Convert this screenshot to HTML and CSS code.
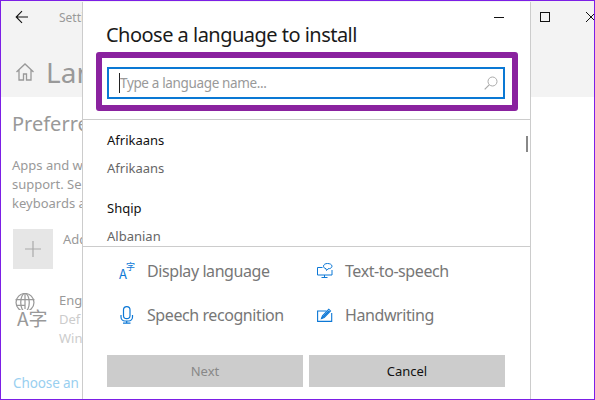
FILE: index.html
```html
<!DOCTYPE html>
<html lang="en">
<head>
<meta charset="utf-8">
<title>Choose a language to install</title>
<link rel="stylesheet" href="styles.css">
</head>
<body>
<div class="window">
  <div class="settings">
    <header class="top">
      <div class="bar">
        <svg class="back" width="14" height="14" viewBox="0 0 14 14"><path d="M13 7H1.500M7 1.200 1.200 7 7 12.800" fill="none" stroke="#111" stroke-width="1.100"/></svg>
        <span class="app">Setti</span>
      </div>
      <div class="heading">
        <svg class="home" width="20" height="20" viewBox="0 0 20 20"><path d="M1.500 10 10 2l8.500 8M4 8v10h4.500v-6h3v6H16V8" fill="none" stroke="#999" stroke-width="1.300"/></svg>
        <span class="page">Lan</span>
      </div>
    </header>
    <main class="content">
      <h2 class="sub">Preferre</h2>
      <p class="para">Apps and w<br>support. Se<br>keyboards a</p>
      <div class="add">
        <div class="tile"><svg width="20" height="20" viewBox="0 0 20 20"><path d="M10 2v16M2 10h16" stroke="#aaa" stroke-width="1.200"/></svg></div>
        <span class="add-label">Add</span>
      </div>
      <div class="lang">
        <div class="lang-icon">
          <svg class="globe" width="22" height="18" viewBox="0 0 22 18"><g fill="none" stroke="#999" stroke-width="1.300"><circle cx="11" cy="10" r="9.500"/><ellipse cx="11" cy="10" rx="4.500" ry="9.500"/><path d="M1 7h20M11 0v17M2 13h9"/></g></svg>
          <span class="lang-glyph">A字</span>
        </div>
        <div class="lang-text"><span class="l1">Eng</span><span class="l2">Def</span><span class="l2">Win</span></div>
      </div>
      <a class="choose">Choose an</a>
    </main>
  </div>

  <div class="ctl-max"></div>
  <svg class="ctl-close" width="10" height="10" viewBox="0 0 10 10"><path d="M0 0l10 10M10 0 0 10" stroke="#111" stroke-width="1"/></svg>

  <section class="dialog">
    <div class="min"></div>
    <h1 class="title">Choose a language to install</h1>
    <div class="highlight">
      <div class="search">
        <span class="caret"></span>
        <span class="placeholder">Type a language name...</span>
        <svg class="mag" width="14" height="14" viewBox="0 0 14 14"><circle cx="8.500" cy="5.500" r="4.500" fill="none" stroke="#aaa" stroke-width="1"/><path d="M5.200 8.800 .7 13.300" stroke="#aaa" stroke-width="1.200"/></svg>
      </div>
    </div>
    <div class="list">
      <div class="item"><span class="native">Afrikaans</span><span class="eng">Afrikaans</span></div>
      <div class="item"><span class="native">Shqip</span><span class="eng">Albanian</span></div>
      <div class="thumb"></div>
    </div>
    <div class="features">
      <div class="feat">
        <span class="ficon glyphs"><span class="ga">A</span><span class="gz">字</span></span>
        <span>Display language</span>
      </div>
      <div class="feat">
        <svg class="ficon" width="16" height="16" viewBox="0 0 16 16"><g fill="none" stroke="#0d78d6" stroke-width="1"><path d="M5.500 4.500H.5v7.500h14.500V7"/><path d="M7.500 12v2.500M4.500 14.500h6"/><path d="M10.500.5c-2.200 0-4 1-4 2.700 0 1.300 1 2.200 2.500 2.500l.5 1.800 1.500-1.700c2.300-.1 4-1 4-2.600S13 .5 10.500.5z"/></g></svg>
        <span>Text-to-speech</span>
      </div>
      <div class="feat">
        <svg class="ficon" width="16" height="18" viewBox="0 0 16 18"><g fill="none" stroke="#0d78d6" stroke-width="1.200"><rect x="4.500" y=".6" width="6.500" height="12" rx="3.200"/><path d="M2 9v2a4 4 0 0 0 4 4h3.500a4 4 0 0 0 4-4V9M7.700 15v2M4 17.200h7.500"/></g></svg>
        <span>Speech recognition</span>
      </div>
      <div class="feat">
        <svg class="ficon" width="16" height="14" viewBox="0 0 16 14"><g fill="none" stroke="#0d78d6" stroke-width="1.100"><path d="M9.500 3H.6v10.400h14.100V5"/><path d="M4.500 10.500l1-2.700L11.800 1.200l1.700 1.700L7.200 9.500z"/><path d="M5 10l1.800-1.700L12 3" stroke-width="1.500"/></g></svg>
        <span>Handwriting</span>
      </div>
    </div>
    <div class="actions">
      <button class="btn off">Next</button>
      <button class="btn">Cancel</button>
    </div>
  </section>
</div>
</body>
</html>
```
FILE: styles.css
```css
* { box-sizing: border-box; }
html, body { margin: 0; height: 100%; }
body { font-family: "Noto Sans", "Open Sans", sans-serif; background: #fff; }
.window { position: relative; width: 595px; height: 400px; border: 1px solid #7c1fe6; overflow: hidden; background: #fff; }
.settings { color: #999; height: 100%; }
.top { background: #f3f3f3; height: 96px; padding: 6px 0 0 14px; }
.bar { display: flex; align-items: center; height: 20px; }
.back { display: block; }
.app { font-size: 12px; margin-left: 30px; }
.heading { display: flex; align-items: center; margin-top: 25px; }
.home { display: block; }
.page { font-size: 28px; line-height: 40px; margin-left: 11px; white-space: nowrap; }
.content { padding: 13px 0 0 11px; white-space: nowrap; }
.sub { font-size: 20px; font-weight: 400; margin: 0; line-height: 28px; }
.para { font-size: 13px; line-height: 19px; margin: 18px 0 0 0; }
.add { display: flex; align-items: flex-start; gap: 10px; margin: 16px 0 0 1px; }
.tile { width: 40px; height: 40px; background: #e6e6e6; display: flex; align-items: center; justify-content: center; }
.add-label { font-size: 13px; margin-top: 1px; }
.lang { display: flex; margin: 24px 0 0 3px; gap: 11px; }
.lang-icon { width: 33px; height: 34px; display: flex; flex-direction: column; align-items: flex-start; }
.globe { display: block; margin-left: -1px; }
.lang-glyph { font: 19px/19px "Noto Sans CJK SC", "Noto Sans", sans-serif; margin: -2px 0 0 2px; color: #999; white-space: nowrap; }
.lang-text { display: flex; flex-direction: column; font-size: 13px; line-height: 19px; margin-top: -2px; }
.l2 { color: #ccc; }
.choose { display: block; font-size: 13.500px; letter-spacing: -.1px; color: #99cff0; margin: 26px 0 0 1px; line-height: 19px; }
.ctl-max { position: absolute; left: 539px; top: 11px; width: 10px; height: 10px; border: 1px solid #111; }
.ctl-close { position: absolute; left: 585px; top: 11px; }
.dialog { position: absolute; left: 81px; top: 1px; bottom: 0; width: 449px; background: #fff; border-left: 1px solid #ccc; border-right: 1px solid #ccc; display: flex; flex-direction: column; }
.min { position: absolute; left: 411px; top: 15px; width: 10px; height: 1px; background: #111; }
.title { font-size: 20px; font-weight: 400; letter-spacing: -.52px; color: #1a1a1a; margin: 0; padding: 16px 0 0 23px; line-height: 33px; height: 50px; white-space: nowrap; }
.highlight { margin-left: 13px; width: 422px; height: 59px; border: 6px solid #8a229f; border-radius: 3px; padding: 9px 7px 0 5px; }
.search { height: 32px; border: 2px solid #0a78d4; display: flex; align-items: center; padding: 0 5px 0 10px; position: relative; }
.caret { width: 1px; height: 20px; background: #222; }
.placeholder { font-size: 13.500px; letter-spacing: -.35px; color: #999; flex: 1; white-space: nowrap; }
.mag { display: block; }
.list { position: relative; margin-top: 8px; height: 128px; border-top: 1px solid #ccc; border-bottom: 1px solid #ccc; overflow: hidden; padding: 11px 0 0 24px; }
.item { display: flex; flex-direction: column; margin-bottom: 21px; }
.native { font-size: 13px; line-height: 19px; color: #111; }
.eng { font-size: 13px; line-height: 19px; color: #666; margin-top: 9px; }
.thumb { position: absolute; right: 2px; top: 16px; width: 2px; height: 16px; background: #888; }
.features { display: grid; grid-template-columns: 198px 1fr; row-gap: 18px; padding: 11px 0 0 36px; color: #777; font-size: 16px; letter-spacing: -.42px; line-height: 26px; }
.feat { display: flex; align-items: center; gap: 12px; white-space: nowrap; }
.ficon { flex: none; width: 16px; }
.glyphs { position: relative; height: 18px; display: block; color: #0d78d6; font-family: "Noto Sans CJK SC", sans-serif; letter-spacing: 0; }
.ga { position: absolute; left: 0; top: 5px; font-size: 13px; line-height: 14px; }
.gz { position: absolute; left: 7px; top: 0; font-size: 9px; line-height: 10px; }
.actions { display: flex; gap: 6px; margin: 27px 0 0 24px; }
.btn { width: 196px; height: 32px; border: 0; padding: 0; background: #ccc; color: #111; font: 13px "Noto Sans", sans-serif; }
.btn.off { color: #888; }
```
